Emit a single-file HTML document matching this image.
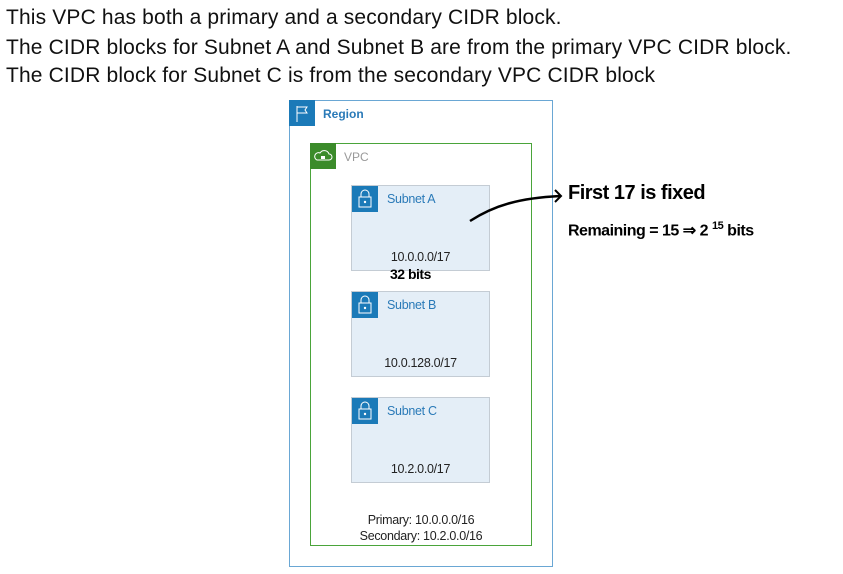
<!DOCTYPE html>
<html><head><style>
body{margin:0;width:843px;height:574px;background:#fff;position:relative;overflow:hidden;font-family:"Liberation Sans",sans-serif}
.t{position:absolute;left:6px;font-size:21px;color:#111;white-space:nowrap;letter-spacing:0.15px}
.box{position:absolute;box-sizing:border-box}
.ic{position:absolute;left:0;top:0;width:26px;height:26px}
.lbl{position:absolute;font-size:12px}
.sub{position:absolute;left:351px;width:139px;height:86px;background:#e4eef7;border:1px solid #c4ccd4;box-sizing:border-box}
.sub .ic{background:#1b7ab8}
.sub .name{position:absolute;left:35px;top:6px;font-size:12.5px;color:#2a7ab8;letter-spacing:-0.3px}
.sub .ip{position:absolute;left:0;right:0;bottom:6px;text-align:center;font-size:12.5px;color:#222;letter-spacing:-0.3px}
.hw{position:absolute;font-family:"Liberation Sans",sans-serif;color:#000;white-space:nowrap;font-weight:bold}
</style></head><body>
<div class="t" style="top:6px">This VPC has both a primary and a secondary CIDR block.</div>
<div class="t" style="top:36px">The CIDR blocks for Subnet A and Subnet B are from the primary VPC CIDR block.</div>
<div class="t" style="top:64px">The CIDR block for Subnet C is from the secondary VPC CIDR block</div>

<div class="box" style="left:289px;top:100px;width:264px;height:467px;border:1px solid #6aa7d4"></div>
<div class="ic" style="left:289px;top:100px;background:#1b7ab8"><svg width="26" height="26"><path d="M8 6v16M8 7h10l-2 3 2 3H8" stroke="#fff" fill="none" stroke-width="1"/></svg></div>
<div class="lbl" style="left:323px;top:107px;color:#2a7ab8;font-weight:bold">Region</div>

<div class="box" style="left:310px;top:143px;width:222px;height:403px;border:1px solid #4aa43a"></div>
<div class="ic" style="left:310px;top:143px;background:#3b8b2a"><svg width="26" height="26"><path d="M7 17h12a3 3 0 0 0 0-6 5 5 0 0 0-9-1 3 3 0 0 0-3 7z" stroke="#fff" fill="none"/><rect x="11" y="13" width="4" height="3" fill="#fff"/></svg></div>
<div class="lbl" style="left:344px;top:150px;color:#999">VPC</div>

<div class="sub" style="top:185px"><div class="ic"><svg width="26" height="26"><rect x="7" y="11" width="12" height="10" stroke="#fff" fill="none"/><path d="M9 11V8a4 4 0 0 1 8 0v3" stroke="#fff" fill="none"/><circle cx="13" cy="16" r="1.2" fill="#fff"/></svg></div><div class="name">Subnet A</div><div class="ip">10.0.0.0/17</div></div>
<div class="sub" style="top:291px"><div class="ic"><svg width="26" height="26"><rect x="7" y="11" width="12" height="10" stroke="#fff" fill="none"/><path d="M9 11V8a4 4 0 0 1 8 0v3" stroke="#fff" fill="none"/><circle cx="13" cy="16" r="1.2" fill="#fff"/></svg></div><div class="name">Subnet B</div><div class="ip">10.0.128.0/17</div></div>
<div class="sub" style="top:397px"><div class="ic"><svg width="26" height="26"><rect x="7" y="11" width="12" height="10" stroke="#fff" fill="none"/><path d="M9 11V8a4 4 0 0 1 8 0v3" stroke="#fff" fill="none"/><circle cx="13" cy="16" r="1.2" fill="#fff"/></svg></div><div class="name">Subnet C</div><div class="ip">10.2.0.0/17</div></div>

<div style="position:absolute;left:310px;width:222px;top:512px;text-align:center;font-size:12.5px;color:#222;line-height:16px;letter-spacing:-0.3px">Primary: 10.0.0.0/16<br>Secondary: 10.2.0.0/16</div>

<svg style="position:absolute;left:0;top:0" width="843" height="574"><path d="M470 221 C495 205 520 198 560 196" stroke="#000" stroke-width="2.5" fill="none"/><path d="M555 190 L561 196 L555 202" stroke="#000" stroke-width="2" fill="none"/></svg>
<div class="hw" style="left:568px;top:182px;font-size:20px;letter-spacing:-0.5px">First 17 is fixed</div>
<div class="hw" style="left:568px;top:220px;font-size:16px;letter-spacing:-0.5px">Remaining = 15 ⇒ 2 <sup style="font-size:11px">15</sup> bits</div>
<div class="hw" style="left:390px;top:266px;font-size:14px;letter-spacing:-0.5px">32 bits</div>
</body></html>
